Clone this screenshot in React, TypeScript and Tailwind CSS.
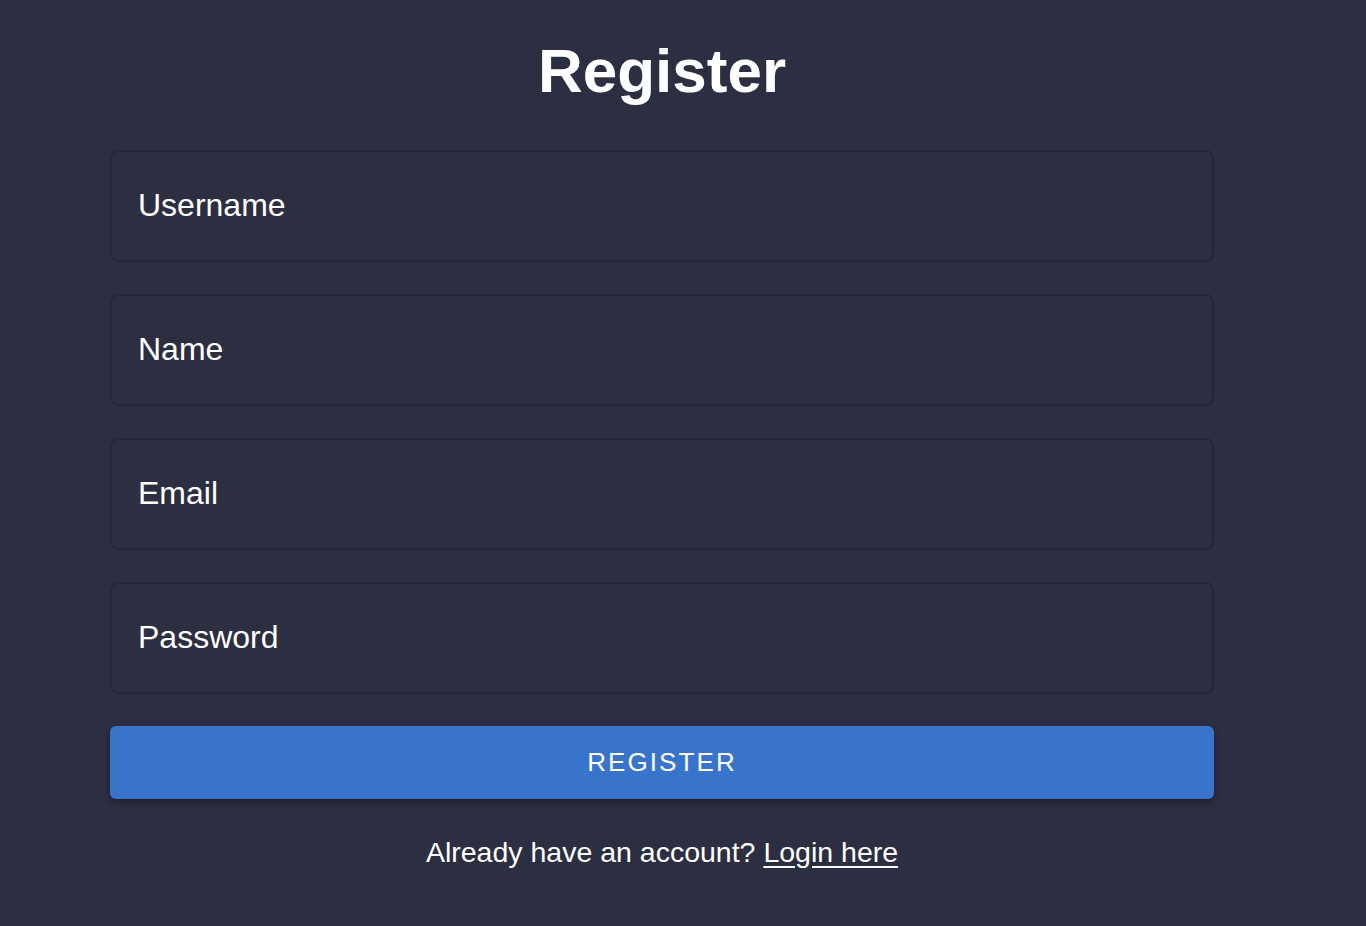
import React from "react";

const fields = ["Username", "Name", "Email", "Password"];

const App = () => {
  return (
    <div
      className="min-h-[926px] w-full bg-[#2c2e42] text-white"
      style={{ fontFamily: '"Liberation Sans", Arial, sans-serif' }}
    >
      <div className="ml-[110px] w-[1104px] flex flex-col items-stretch">
        <h1 className="mt-[34px] text-center text-[62px] leading-[74px] font-bold">
          Register
        </h1>

        <form className="mt-[42px] flex flex-col gap-[32px]">
          {fields.map((f) => (
            <div
              key={f}
              className="h-[112px] rounded-[8px] border-2 border-[#24263a] flex items-center pl-[26px] pb-[2px] text-[32px]"
            >
              {f}
            </div>
          ))}
        </form>

        <button className="mt-[32px] h-[73px] rounded-[6px] bg-[#3874cb] text-[26px] tracking-[0.08em] shadow-[0_3px_6px_rgba(0,0,0,0.35)]">
          REGISTER
        </button>

        <p className="mt-[32px] text-center text-[28.5px]">
          Already have an account?{" "}
          <a className="underline underline-offset-[4px]" href="#">
            Login here
          </a>
        </p>
      </div>
    </div>
  );
};

export default App;
